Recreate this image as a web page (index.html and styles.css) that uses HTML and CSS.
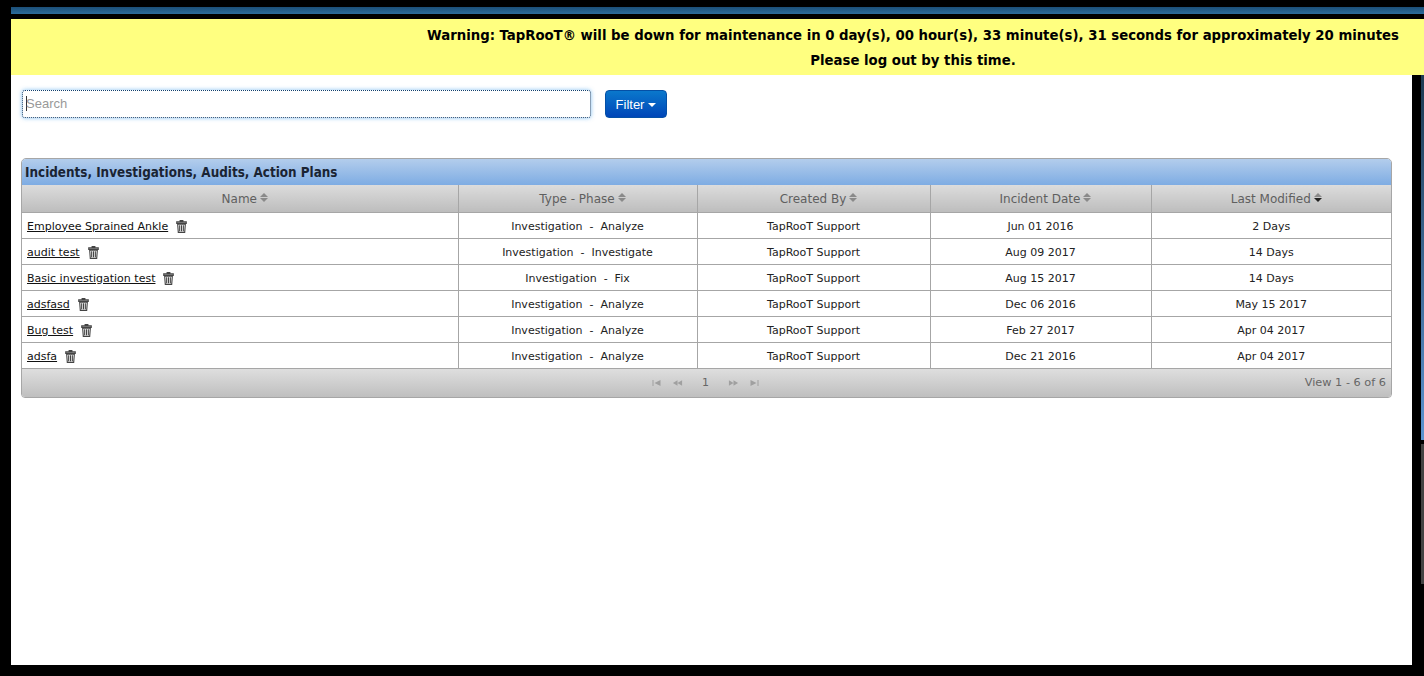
FILE: index.html
```html
<!DOCTYPE html>
<html lang="en">
<head>
<meta charset="utf-8">
<title>Incidents</title>
<link rel="stylesheet" href="styles.css">
</head>
<body>
<div class="topbar-wrap"><div class="topbar"></div></div>
<div class="warning">
  <p class="warning-line">Warning: TapRooT® will be down for maintenance in 0 day(s), 00 hour(s), 33 minute(s), 31 seconds for approximately 20 minutes</p>
  <p class="warning-line">Please log out by this time.</p>
</div>
<div class="main-row">
  <main class="content">
    <div class="search-row">
      <input class="search" type="text" placeholder="Search">
      <button class="filter" type="button">Filter<span class="caret"></span></button>
    </div>
    <section class="grid">
      <h2 class="grid-title">Incidents, Investigations, Audits, Action Plans</h2>
      <table class="grid-table">
        <colgroup><col class="c1"><col class="c2"><col class="c3"><col class="c4"><col class="c5"></colgroup>
        <thead>
          <tr>
            <th>Name<span class="sort"><i class="up"></i><i class="down"></i></span></th>
            <th>Type - Phase<span class="sort"><i class="up"></i><i class="down"></i></span></th>
            <th>Created By<span class="sort"><i class="up"></i><i class="down"></i></span></th>
            <th>Incident Date<span class="sort"><i class="up"></i><i class="down"></i></span></th>
            <th>Last Modified<span class="sort"><i class="up"></i><i class="down active"></i></span></th>
          </tr>
        </thead>
        <tbody>
          <tr><td class="name"><a href="#">Employee Sprained Ankle</a><svg class="trash" viewBox="0 0 12 14"><path d="M4.5 1.6V.6h3v1M.8 2h10.4v1.6H.8zM1.8 4.4h8.4l-.7 9H2.500zM4 5.500v6.800M6 5.500v6.800M8 5.500v6.800"/></svg></td><td>Investigation &nbsp;-&nbsp; Analyze</td><td>TapRooT Support</td><td>Jun 01 2016</td><td>2 Days</td></tr>
          <tr><td class="name"><a href="#">audit test</a><svg class="trash" viewBox="0 0 12 14"><path d="M4.5 1.6V.6h3v1M.8 2h10.4v1.6H.8zM1.8 4.4h8.4l-.7 9H2.500zM4 5.500v6.800M6 5.500v6.800M8 5.500v6.800"/></svg></td><td>Investigation &nbsp;-&nbsp; Investigate</td><td>TapRooT Support</td><td>Aug 09 2017</td><td>14 Days</td></tr>
          <tr><td class="name"><a href="#">Basic investigation test</a><svg class="trash" viewBox="0 0 12 14"><path d="M4.5 1.6V.6h3v1M.8 2h10.4v1.6H.8zM1.8 4.4h8.4l-.7 9H2.500zM4 5.500v6.800M6 5.500v6.800M8 5.500v6.800"/></svg></td><td>Investigation &nbsp;-&nbsp; Fix</td><td>TapRooT Support</td><td>Aug 15 2017</td><td>14 Days</td></tr>
          <tr><td class="name"><a href="#">adsfasd</a><svg class="trash" viewBox="0 0 12 14"><path d="M4.5 1.6V.6h3v1M.8 2h10.4v1.6H.8zM1.8 4.4h8.4l-.7 9H2.500zM4 5.500v6.800M6 5.500v6.800M8 5.500v6.800"/></svg></td><td>Investigation &nbsp;-&nbsp; Analyze</td><td>TapRooT Support</td><td>Dec 06 2016</td><td>May 15 2017</td></tr>
          <tr><td class="name"><a href="#">Bug test</a><svg class="trash" viewBox="0 0 12 14"><path d="M4.5 1.6V.6h3v1M.8 2h10.4v1.6H.8zM1.8 4.4h8.4l-.7 9H2.500zM4 5.500v6.800M6 5.500v6.800M8 5.500v6.800"/></svg></td><td>Investigation &nbsp;-&nbsp; Analyze</td><td>TapRooT Support</td><td>Feb 27 2017</td><td>Apr 04 2017</td></tr>
          <tr><td class="name"><a href="#">adsfa</a><svg class="trash" viewBox="0 0 12 14"><path d="M4.5 1.6V.6h3v1M.8 2h10.4v1.6H.8zM1.8 4.4h8.4l-.7 9H2.500zM4 5.500v6.800M6 5.500v6.800M8 5.500v6.800"/></svg></td><td>Investigation &nbsp;-&nbsp; Analyze</td><td>TapRooT Support</td><td>Dec 21 2016</td><td>Apr 04 2017</td></tr>
        </tbody>
      </table>
      <div class="pager">
        <div class="pager-center">
          <svg class="pg" viewBox="0 0 10 8"><path d="M1 1v6h1V1zM9 1v6L3 4z"/></svg>
          <svg class="pg" viewBox="0 0 12 8"><path d="M6 1v6L1 4zM11 1v6L6 4z"/></svg>
          <span class="pg-num">1</span>
          <svg class="pg" viewBox="0 0 12 8"><path d="M1 1v6l5-3zM6 1v6l5-3z"/></svg>
          <svg class="pg" viewBox="0 0 10 8"><path d="M1 1v6l6-3zM8 1v6h1V1z"/></svg>
        </div>
        <span class="pager-info">View 1 - 6 of 6</span>
      </div>
    </section>
  </main>
  <aside class="side">
    <div class="side-strip"></div>
    <div class="side-gray"></div>
  </aside>
</div>
</body>
</html>
```
FILE: styles.css
```css
* { box-sizing: border-box; }
html, body { margin: 0; height: 100%; }
body {
  background: #000;
  padding-left: 11px;
  height: 676px;
  overflow: hidden;
  font-family: "DejaVu Sans", Verdana, sans-serif;
  display: flex;
  flex-direction: column;
}
.topbar-wrap { height: 19px; padding-top: 7px; flex: none; }
.topbar { height: 7px; background: linear-gradient(#1c4f78, #2b6c9c); }
.warning {
  flex: none;
  height: 56px;
  background: #ffff80;
  color: #000;
  font-family: "DejaVu Sans Condensed", "DejaVu Sans", sans-serif;
  font-weight: bold;
  font-size: 14.76px;
  text-align: center;
  padding: 3px 0 0 391px;
}
.warning-line { margin: 0; line-height: 25px; white-space: nowrap; }
.main-row { display: flex; height: 590px; flex: none; }
.content { width: 1401px; background: #fff; padding: 15px 10px 0; }
.side { flex: 1; padding-left: 9px; }
.side-strip { height: 365px; background: linear-gradient(#1d3a52, #5c94d0); }
.side-gray { height: 140px; margin-top: 4px; background: #444; }
.search-row { display: flex; align-items: flex-start; gap: 14px; height: 68px; }
.search {
  width: 569px;
  height: 28px;
  margin-left: 1px;
  border: 1px dotted #12406e;
  border-radius: 3px;
  box-shadow: 0 0 4px rgba(82,168,236,.7);
  background: #fff linear-gradient(#333, #333) 3px 5px / 1px 15px no-repeat;
  font: 13px "Liberation Sans", Arial, sans-serif;
  padding: 0 3px 2px;
  outline: none;
}
.search::placeholder { color: #999; }
.filter {
  width: 62px;
  height: 28px;
  border: 1px solid #0450a6;
  border-radius: 4px;
  background: linear-gradient(#0a78cc, #0046b8);
  color: #fff;
  font: 13px "Liberation Sans", Arial, sans-serif;
  padding: 0;
}
.caret {
  display: inline-block;
  margin-left: 4px;
  vertical-align: middle;
  border-left: 4px solid transparent;
  border-right: 4px solid transparent;
  border-top: 4px solid #fff;
}
.grid {
  width: 1371px;
  border: 1px solid #a6a6a6;
  border-radius: 5px 5px 4px 4px;
  overflow: hidden;
}
.grid-title {
  margin: 0;
  height: 26px;
  background: linear-gradient(#b3cdec, #7eace3);
  color: #1a2433;
  font-family: "DejaVu Sans Condensed", "DejaVu Sans", sans-serif;
  font-size: 13.35px;
  font-weight: bold;
  line-height: 27px;
  padding-left: 3px;
  white-space: nowrap;
}
.grid-table {
  width: 100%;
  border-collapse: collapse;
  table-layout: fixed;
  font-size: 11px;
  color: #222;
}
.c1 { width: 436px; }
.c2 { width: 239px; }
.c3 { width: 233px; }
.c4 { width: 221px; }
th {
  height: 27px;
  font-weight: normal;
  font-size: 12px;
  color: #5f5f5f;
  background: linear-gradient(#dcdcdc, #bdbdbd);
  border-left: 1px solid #a6a6a6;
  border-bottom: 1px solid #a6a6a6;
  padding: 2px 0 0 10px;
}
th:first-child, td:first-child { border-left: 0; }
td {
  height: 26px;
  border-left: 1px solid #a6a6a6;
  border-bottom: 1px solid #a6a6a6;
  text-align: center;
  padding: 2px 0 0;
  white-space: nowrap;
}
td.name { text-align: left; padding-left: 5px; }
.name a { color: #111; text-decoration: underline; }
.trash {
  width: 11px;
  height: 13px;
  margin-left: 8px;
  vertical-align: -3px;
  fill: none;
  stroke: #444;
  stroke-width: 1.2;
}
.sort { display: inline-block; width: 8px; margin-left: 3px; vertical-align: 1px; }
.sort i { display: block; width: 0; margin: 0 auto; border-left: 4px solid transparent; border-right: 4px solid transparent; }
.sort .up { border-bottom: 4px solid #8a8a8a; margin-bottom: 1px; }
.sort .down { border-top: 4px solid #8a8a8a; }
.sort .down.active { border-top-color: #222; }
.pager {
  position: relative;
  height: 28px;
  background: linear-gradient(#dedede, #bfbfbf);
  display: flex;
  align-items: center;
  justify-content: flex-end;
  padding-right: 5px;
  font-size: 11.3px;
  color: #666;
}
.pager-center {
  position: absolute;
  left: 629px;
  top: 0;
  height: 28px;
  display: flex;
  align-items: center;
  gap: 10px;
  font-size: 11px;
}
.pg { width: 11px; height: 8px; fill: #a0a0a0; }
.pg-num { margin: 0 9px; }
```
